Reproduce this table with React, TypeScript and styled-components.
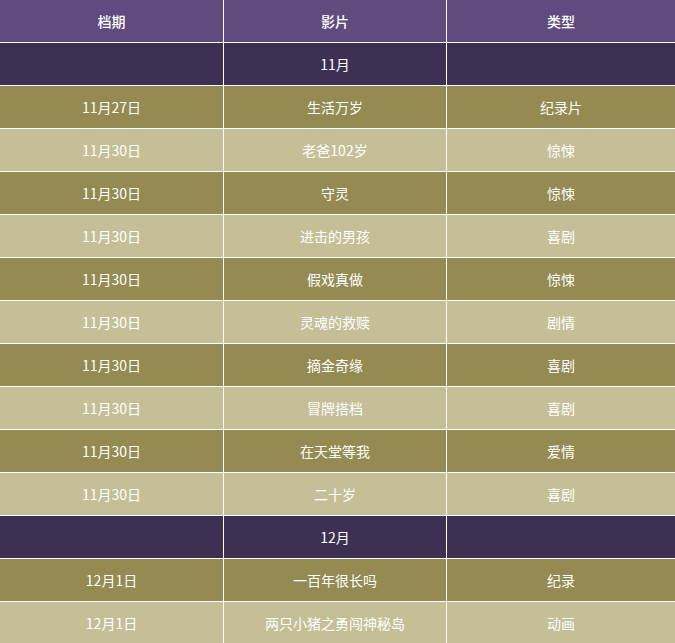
import React from "react";
import styled, { createGlobalStyle } from "styled-components";

type Kind = "head" | "month" | "dark" | "light";

interface Movie {
  date: string;
  title: string;
  genre: string;
}

const november: Movie[] = [
  { date: "11月27日", title: "生活万岁", genre: "纪录片" },
  { date: "11月30日", title: "老爸102岁", genre: "惊悚" },
  { date: "11月30日", title: "守灵", genre: "惊悚" },
  { date: "11月30日", title: "进击的男孩", genre: "喜剧" },
  { date: "11月30日", title: "假戏真做", genre: "惊悚" },
  { date: "11月30日", title: "灵魂的救赎", genre: "剧情" },
  { date: "11月30日", title: "摘金奇缘", genre: "喜剧" },
  { date: "11月30日", title: "冒牌搭档", genre: "喜剧" },
  { date: "11月30日", title: "在天堂等我", genre: "爱情" },
  { date: "11月30日", title: "二十岁", genre: "喜剧" },
];

const december: Movie[] = [
  { date: "12月1日", title: "一百年很长吗", genre: "纪录" },
  { date: "12月1日", title: "两只小猪之勇闯神秘岛", genre: "动画" },
];

const GlobalStyle = createGlobalStyle`
  html, body {
    margin: 0;
    padding: 0;
    background: #ffffff;
    font-family: "Microsoft YaHei", "Noto Sans CJK SC", "Noto Sans", sans-serif;
  }
`;

const bg: Record<Kind, string> = {
  head: "#5f4b7d",
  month: "#3e3052",
  dark: "#948a52",
  light: "#c5bf97",
};

const Table = styled.table`
  width: 675px;
  border-collapse: separate;
  border-spacing: 0;
  table-layout: fixed;
`;

const Col = styled.col<{ $w?: number }>`
  width: ${(p) => (p.$w ? `${p.$w}px` : "auto")};
`;

const Row = styled.tr<{ $kind: Kind }>`
  background: ${(p) => bg[p.$kind]};
`;

const Cell = styled.td`
  height: 42px;
  padding: 0;
  text-align: center;
  vertical-align: middle;
  color: #ffffff;
  font-size: 14px;
  line-height: 20px;
  border-right: 1px solid #ffffff;
  border-bottom: 1px solid #ffffff;
  &:last-child {
    border-right: none;
  }
`;

const HeadCell = styled(Cell).attrs({ as: "th" })`
  font-weight: 500;
`;

const Section = ({ month, rows }: { month: string; rows: Movie[] }) => (
  <>
    <Row $kind="month">
      <Cell />
      <Cell>{month}</Cell>
      <Cell />
    </Row>
    {rows.map((m, i) => (
      <Row key={i} $kind={i % 2 === 0 ? "dark" : "light"}>
        <Cell>{m.date}</Cell>
        <Cell>{m.title}</Cell>
        <Cell>{m.genre}</Cell>
      </Row>
    ))}
  </>
);

export default function App() {
  return (
    <>
      <GlobalStyle />
      <Table>
        <colgroup>
          <Col $w={224} />
          <Col $w={223} />
          <Col />
        </colgroup>
        <thead>
          <Row $kind="head">
            <HeadCell>档期</HeadCell>
            <HeadCell>影片</HeadCell>
            <HeadCell>类型</HeadCell>
          </Row>
        </thead>
        <tbody>
          <Section month="11月" rows={november} />
          <Section month="12月" rows={december} />
        </tbody>
      </Table>
    </>
  );
}
